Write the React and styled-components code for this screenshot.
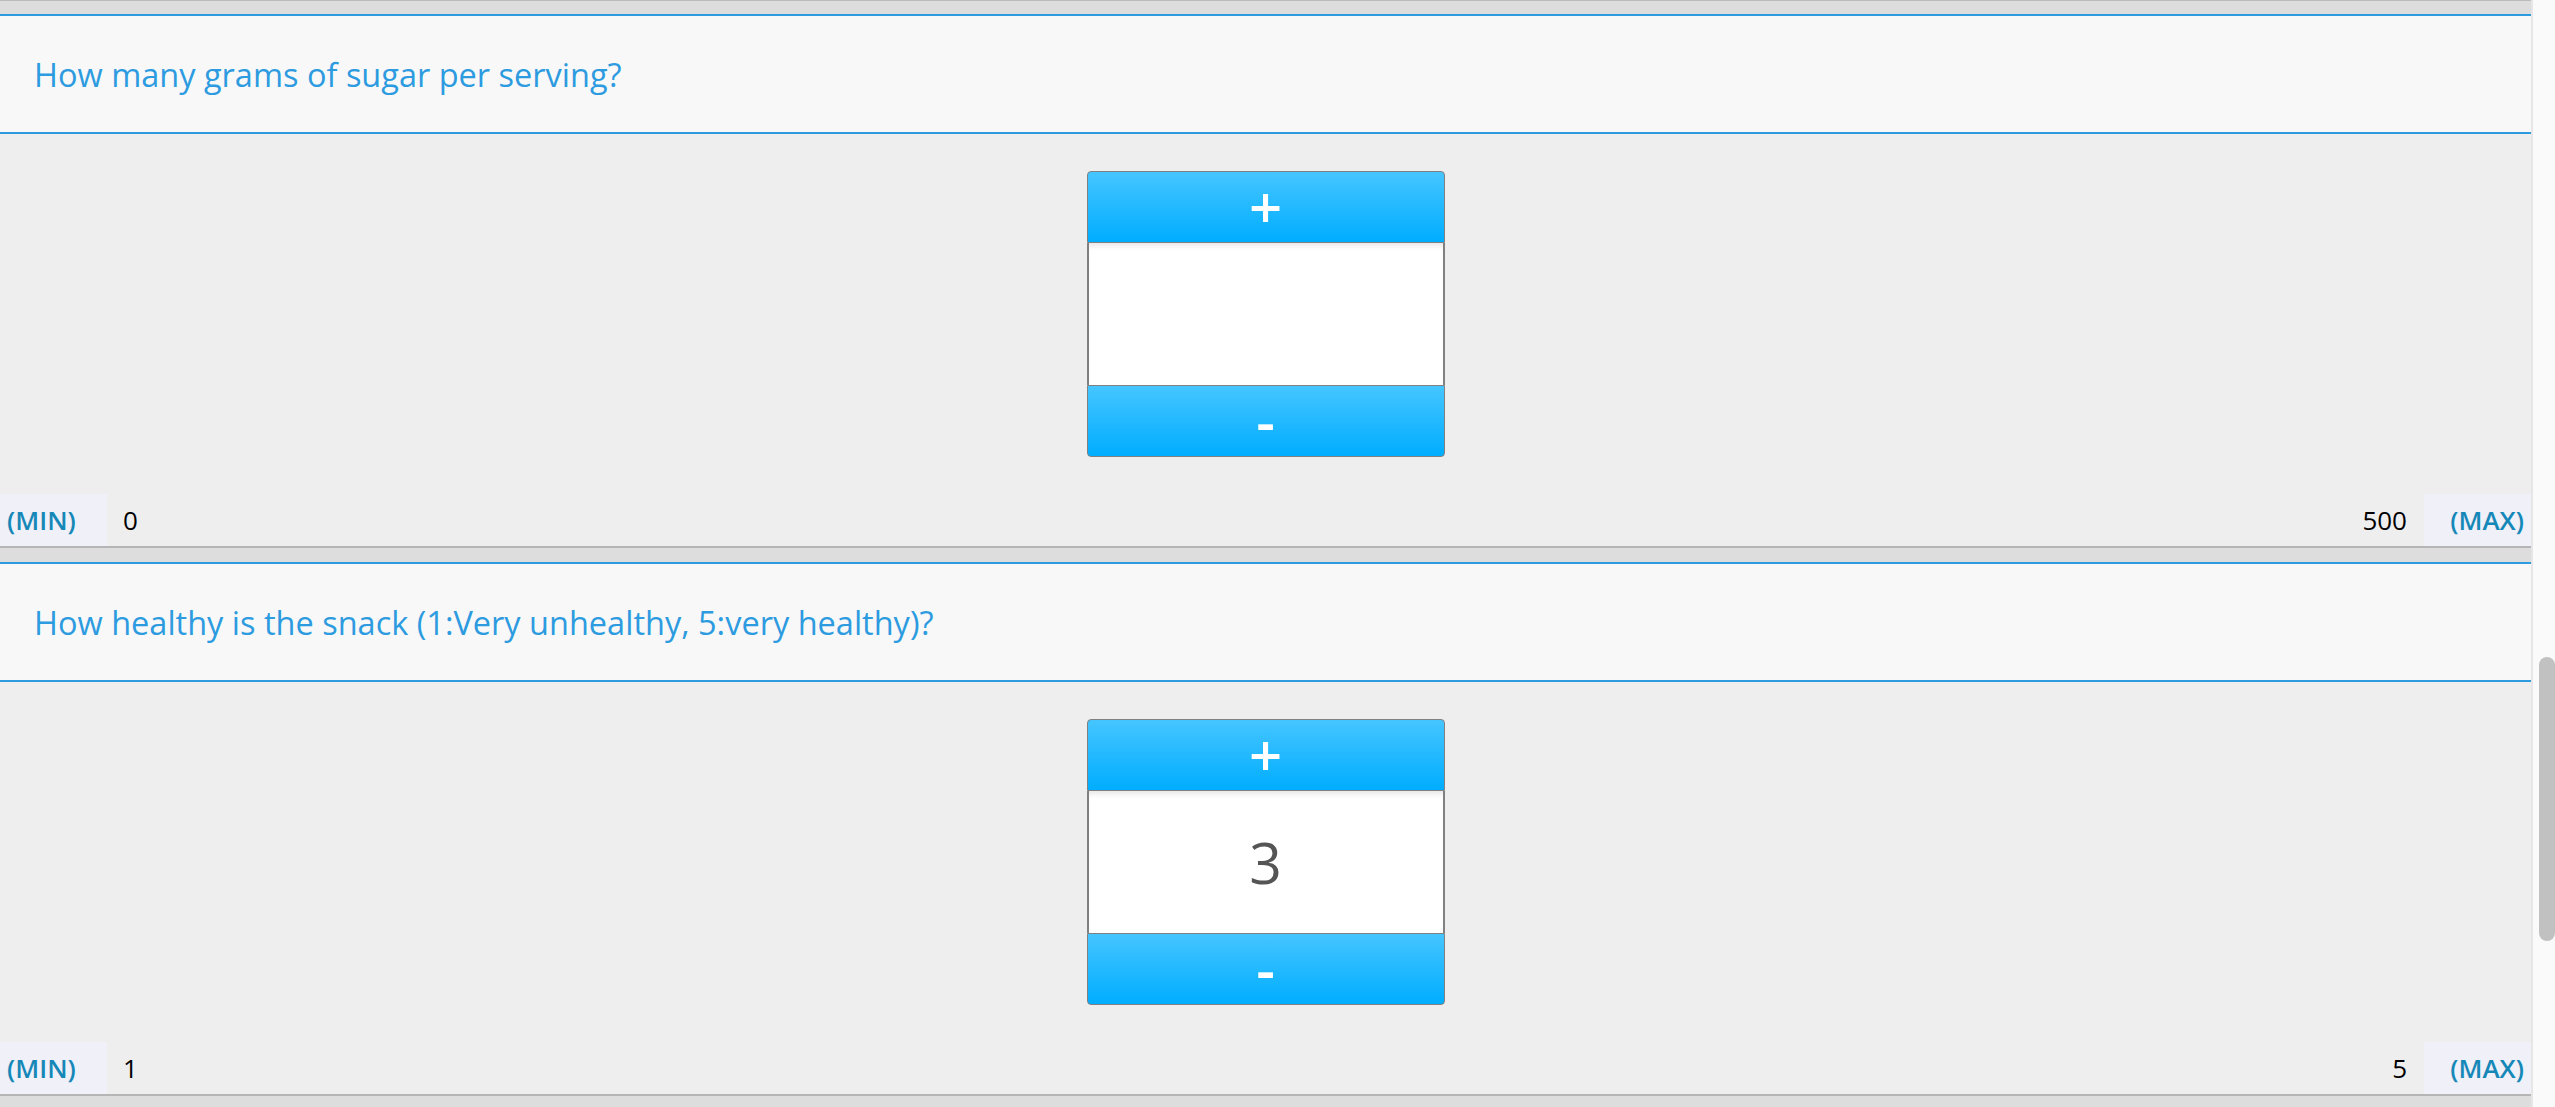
import React from 'react';
import styled, { createGlobalStyle } from 'styled-components';

const GlobalStyle = createGlobalStyle`
  html, body {
    margin: 0;
    padding: 0;
    height: 100%;
    overflow: hidden;
  }
  body {
    background: #dddddd;
    font-family: "Open Sans", "Noto Sans", sans-serif;
  }
`;

const Shell = styled.div`
  display: flex;
  height: 1107px;
`;

const Page = styled.div`
  flex: 1;
  background: #dddddd;
`;

const PrevEdge = styled.div`
  height: 1px;
  background: #bbbbbb;
`;

const Section = styled.section`
  margin-top: 13px;
  border-top: 2px solid #2d9be0;
  border-bottom: 2px solid #b5b5b5;
  background: #eeeeee;
  & + & {
    margin-top: 14px;
  }
`;

const Header = styled.div`
  height: 116px;
  display: flex;
  align-items: center;
  padding-left: 34px;
  background: #f8f8f8;
  border-bottom: 2px solid #2d9be0;
  color: #2d9be0;
  font-size: 32.5px;
`;

const Body = styled.div`
  display: flex;
  justify-content: center;
  padding: 37px 0 37px;
`;

const Stepper = styled.div`
  width: 358px;
  display: flex;
  flex-direction: column;
`;

const StepButton = styled.div`
  height: 70px;
  display: flex;
  align-items: center;
  justify-content: center;
  border: 1px solid #808080;
  border-radius: ${({ top }) => (top ? '4px 4px 0 0' : '0 0 4px 4px')};
  background: linear-gradient(to bottom, #45c5ff, #00adff);
  color: #ffffff;
  font-size: 58px;
  font-weight: 600;
  line-height: 1;
  user-select: none;
`;

const ValueBox = styled.div`
  height: 142px;
  display: flex;
  align-items: center;
  justify-content: center;
  background: #ffffff;
  border-left: 2px solid #808080;
  border-right: 2px solid #808080;
  box-shadow: inset 0 6px 6px -4px rgba(0, 0, 0, 0.12);
  color: #555555;
  font-size: 57px;
`;

const RangeRow = styled.div`
  height: 52px;
  display: flex;
  align-items: center;
`;

const RangeTag = styled.div`
  width: 107px;
  height: 100%;
  box-sizing: border-box;
  display: flex;
  align-items: center;
  justify-content: ${({ right }) => (right ? 'flex-end' : 'flex-start')};
  padding: 0 7px;
  background: #eff0f8;
  color: #1688b8;
  font-size: 26px;
  font-weight: 600;
`;

const RangeValue = styled.div`
  flex: ${({ right }) => (right ? 1 : '0 0 auto')};
  text-align: ${({ right }) => (right ? 'right' : 'left')};
  padding: 0 17px 0 16px;
  color: #000000;
  font-size: 26px;
`;

const ScrollTrack = styled.div`
  width: 24px;
  background: #fafafa;
  border-left: 2px solid #e6e6e6;
  padding-top: 657px;
  box-sizing: border-box;
`;

const ScrollThumb = styled.div`
  width: 16px;
  height: 284px;
  margin-left: 6px;
  border-radius: 8px;
  background: #c1c1c1;
`;

const questions = [
  { label: 'How many grams of sugar per serving?', value: '', min: 0, max: 500 },
  { label: 'How healthy is the snack (1:Very unhealthy, 5:very healthy)?', value: '3', min: 1, max: 5 },
];

function Question({ label, value, min, max }) {
  return (
    <Section>
      <Header>{label}</Header>
      <Body>
        <Stepper>
          <StepButton top>+</StepButton>
          <ValueBox>{value}</ValueBox>
          <StepButton>-</StepButton>
        </Stepper>
      </Body>
      <RangeRow>
        <RangeTag>(MIN)</RangeTag>
        <RangeValue>{min}</RangeValue>
        <RangeValue right>{max}</RangeValue>
        <RangeTag right>(MAX)</RangeTag>
      </RangeRow>
    </Section>
  );
}

export default function App() {
  return (
    <>
      <GlobalStyle />
      <Shell>
        <Page>
          <PrevEdge />
          {questions.map((q) => (
            <Question key={q.label} {...q} />
          ))}
        </Page>
        <ScrollTrack>
          <ScrollThumb />
        </ScrollTrack>
      </Shell>
    </>
  );
}
